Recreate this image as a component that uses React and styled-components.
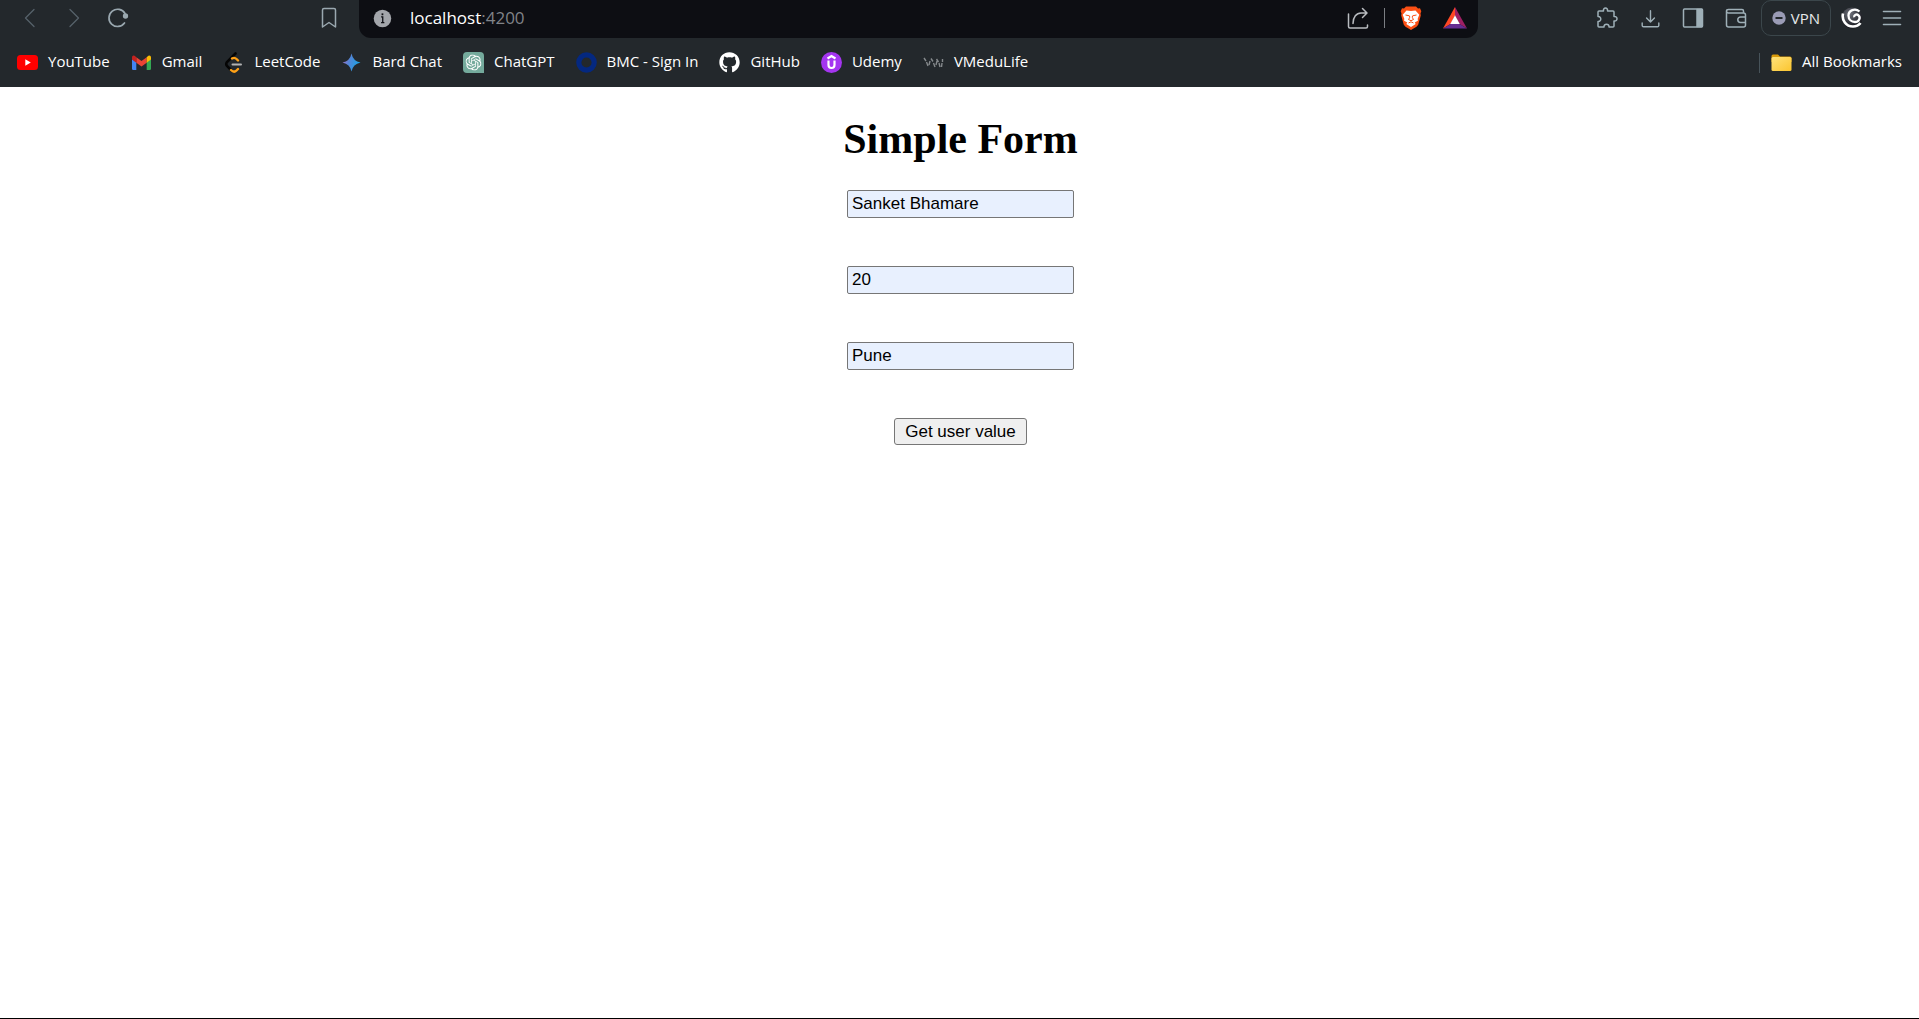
import React, { useState } from "react";
import styled, { createGlobalStyle } from "styled-components";
import { FaGithub } from "react-icons/fa";
import { SiOpenai } from "react-icons/si";

const GlobalStyle = createGlobalStyle`
  *, *::before, *::after { box-sizing: border-box; }
  html, body { margin: 0; }
  body { background: #ffffff; }
`;

const uiFont = `"Open Sans", "Noto Sans", sans-serif`;

const Window = styled.div`
  display: flex;
  flex-direction: column;
  min-height: 100vh;
  border-bottom: 1px solid #000000;
`;

const Chrome = styled.header`
  background: #23282c;
  color: #ffffff;
  font-family: ${uiFont};
`;

const Toolbar = styled.div`
  display: grid;
  grid-template-columns: 359px minmax(0, 1119px) 1fr;
  height: 38px;
`;

const NavGroup = styled.div`
  display: flex;
  align-items: center;
  gap: 20px;
  padding: 0 18px 2px;
  color: #9aa8b0;
`;

const Spacer = styled.span`
  flex: 1;
`;

const IconButton = styled.button`
  display: flex;
  align-items: center;
  justify-content: center;
  flex: none;
  width: 24px;
  height: 36px;
  padding: 0;
  border: 0;
  background: none;
  color: inherit;
  &:disabled { color: #56616a; }
`;

const AddressBar = styled.div`
  display: flex;
  align-items: center;
  gap: 16px;
  padding: 0 11px 2px;
  border-radius: 0 0 12px 12px;
  background: #0d0e13;
  color: #b9bcc0;
`;

const Address = styled.a`
  flex: 1;
  color: #ffffff;
  font-size: 17px;
  line-height: 24px;
  text-decoration: none;
`;

const Port = styled.span`
  color: #808388;
`;

const Divider = styled.span`
  width: 1px;
  height: 20px;
  background: ${(p) => p.$color};
`;

const Shields = styled.div`
  display: flex;
  align-items: center;
  gap: 20px;
`;

const Share = styled.div`
  display: flex;
  align-items: center;
  gap: 14px;
`;

const ToolGroup = styled.div`
  display: flex;
  justify-content: flex-end;
  align-items: center;
  gap: 13px;
  padding: 0 15px 2px 0;
  color: #9fb0b8;
`;

const Tools = styled.div`
  display: flex;
  align-items: center;
  gap: 19px;
`;

const VpnGroup = styled.div`
  display: flex;
  align-items: center;
  gap: 9px;
  padding-right: 3px;
`;

const VpnButton = styled.button`
  display: flex;
  align-items: center;
  justify-content: center;
  gap: 5px;
  width: 70px;
  height: 36px;
  padding: 0;
  border: 1px solid #3b464b;
  border-radius: 10px;
  background: none;
  color: #e6e9ea;
  font-family: ${uiFont};
  font-size: 15px;
`;

const Bookmarks = styled.nav`
  display: flex;
  align-items: center;
  gap: 21px;
  height: 49px;
  padding: 0 17px;
`;

const Bookmark = styled.a`
  display: flex;
  align-items: center;
  gap: 10px;
  color: #ffffff;
  text-decoration: none;
  white-space: nowrap;
`;

const BookmarkLabel = styled.span`
  padding-bottom: 3px;
  font-size: 15px;
  line-height: 20px;
`;

const Folder = styled.div`
  display: flex;
  align-items: center;
  gap: 11px;
  margin-left: auto;
`;

const Page = styled.main`
  flex: 1;
`;

const Form = styled.form`
  display: flex;
  flex-direction: column;
  align-items: center;
  gap: 48px;
  padding: 28px 0 0 2px;
`;

const Heading = styled.h1`
  margin: 0 0 -21px;
  font-family: "Liberation Serif", serif;
  font-size: 42px;
  line-height: 48px;
  font-weight: 700;
  color: #000000;
`;

const Field = styled.input`
  width: 227px;
  height: 28px;
  padding: 0 4px;
  border: 1px solid #767676;
  border-radius: 2px;
  background: #e8f0fe;
  color: #000000;
  font-family: "Liberation Sans", sans-serif;
  font-size: 17px;
`;

const Submit = styled.button`
  width: 133px;
  height: 27px;
  padding: 0;
  border: 1px solid #767676;
  border-radius: 3px;
  background: #efefef;
  color: #000000;
  font-family: "Liberation Sans", sans-serif;
  font-size: 17px;
`;

function Line({ size = 24, width = 2, children }) {
  return (
    <svg width={size} height={size} viewBox="0 0 24 24" fill="none" stroke="currentColor" strokeWidth={width} strokeLinecap="round" strokeLinejoin="round" aria-hidden="true">
      {children}
    </svg>
  );
}

const BackIcon = () => <Line width={1.3}><path d="M16 3.500L7.500 12l8.500 8.500" /></Line>;
const ForwardIcon = () => <Line width={1.3}><path d="M8 3.500l8.500 8.500L8 20.500" /></Line>;
const ReloadIcon = () => (
  <Line width={1.7}>
    <path d="M18.500 17A8.600 8.600 0 1 1 19 7.500" />
    <circle cx="19.500" cy="10" r="1.800" fill="currentColor" />
  </Line>
);
const SaveIcon = () => <Line width={1.5}><path d="M5.500 4q0-1.500 1.500-1.500h10q1.500 0 1.500 1.500v17l-6.500-4.500L5.500 21z" /></Line>;

const InfoIcon = () => (
  <svg width="21" height="21" viewBox="0 0 18 18" aria-hidden="true">
    <circle cx="9" cy="9" r="7.500" fill="#a3a6ab" />
    <path d="M7.800 7.600h1.400v4.800M7.800 12.600h2.800" stroke="#0d0e13" strokeWidth="1.100" fill="none" />
    <rect x="8.200" y="4.600" width="1.500" height="1.600" fill="#0d0e13" />
  </svg>
);

const ShareIcon = () => (
  <Line width={1.5}>
    <path d="M2.500 8v12.500q0 1.500 1.500 1.500h16q1.500 0 1.500-1.500V19M7 17.500C7 11 10.500 7 15 7h5.500M16.500 2.500L21 7l-4.500 4.500" />
  </Line>
);

const BraveIcon = () => (
  <svg width="22" height="24" viewBox="0 0 22 24" aria-hidden="true">
    <path d="M6 .5h10l2 2 2-.2 1.300 3-.8 2.200.3 2-2.600 9.200-1.700 2.100L11 24l-5.500-3.200-1.700-2.100L1.200 9.500l.3-2L.7 5.300l1.300-3 2 .2z" fill="#fb4f14" />
    <path d="M6.500 4.500l4.500.6 4.500-.6 3.800 4.200-1.600 4 .2 2-3.200 1.800 1 1.500-4.700 3-4.700-3 1-1.500-3.200-1.800.2-2-1.600-4z" fill="#fff" />
    <path d="M5.500 9l4 .8M16.500 9l-4 .8M9.600 10v1.700L8.500 13.500l2.500 1.200 2.500-1.200-1.100-1.800V10M8.500 17l2.500-1.200 2.500 1.200" fill="none" stroke="#fb4f14" strokeWidth="1" />
  </svg>
);

const BatIcon = () => (
  <svg width="24" height="22" viewBox="0 0 24 22" aria-hidden="true">
    <path d="M12 0L0 21.500 7.500 17 12 8.500z" fill="#ff4724" />
    <path d="M12 0l12 21.500-7.500-4.500L12 8.500z" fill="#9e1f63" />
    <path d="M0 21.500h24L16.500 17h-9z" fill="#662d91" />
    <path d="M12 8.300L7.200 17h9.600z" fill="#fff" />
  </svg>
);

const PuzzleIcon = () => (
  <Line width={1.5}>
    <path d="M4 5h4.500C7.800 1 13.200 1 12.500 5H18q1 0 1 1v4.500c4-.7 4 5.200 0 4.500V20q0 1-1 1h-4c.4-3.800-5.400-3.800-5 0H4q-1 0-1-1v-4.500c3.700.4 3.700-5.400 0-5V6q0-1 1-1z" />
  </Line>
);
const DownloadIcon = () => (
  <Line size={21} width={1.6}>
    <path d="M12 3v13M7.500 11.500L12 16l4.500-4.500M2.500 17v3q0 1.500 1.500 1.500h16q1.500 0 1.500-1.500v-3" />
  </Line>
);
const PanelIcon = () => (
  <Line width={1.5}>
    <rect x="2.500" y="3" width="19" height="18" rx="1" />
    <path d="M16 3.500h5v17h-5z" fill="currentColor" />
  </Line>
);
const WalletIcon = () => (
  <Line width={1.5}>
    <path d="M19.500 7V5Q19.500 3.500 18 3.500H4.500Q2.500 3.500 2.500 5v14q0 2 2 2h15q2 0 2-2V9q0-2-2-2h-15q-2 0-2-2M21.500 11h-5a2.700 2.700 0 0 0 0 5.400h5" />
  </Line>
);
const VpnIcon = () => (
  <svg width="14" height="14" viewBox="0 0 14 14" aria-hidden="true">
    <circle cx="7" cy="7" r="6.700" fill="#9a9bb5" />
    <rect x="3.500" y="6" width="7" height="2" fill="#23282c" />
  </svg>
);
const SwirlIcon = () => (
  <svg width="22" height="22" viewBox="0 0 22 22" aria-hidden="true">
    <defs>
      <radialGradient id="orb" cx="0.4" cy="0.3" r="0.8">
        <stop offset="0" stopColor="#70737c" />
        <stop offset="0.6" stopColor="#2c2e35" />
        <stop offset="1" stopColor="#0c0d10" />
      </radialGradient>
    </defs>
    <circle cx="11" cy="11" r="10.500" fill="url(#orb)" />
    <path d="M18.500 4.500C14 .5 7.500 3.500 7.500 8.500c0 4 3 6.500 6.500 6.500 4 0 6-4.500 3.500-6.700-2-1.700-4.700-.3-4.300 2" fill="none" stroke="#fff" strokeWidth="2.300" />
    <path d="M2 6.500C.5 13 5 19.500 12 19.500c3.500 0 6-1.500 7.500-3.500" fill="none" stroke="#fff" strokeWidth="2.600" />
  </svg>
);
const MenuIcon = () => <Line width={1.6}><path d="M3.500 5.500h17M3.500 12h17M3.500 18.500h17" /></Line>;

const Logo = ({ children }) => (
  <svg width="21" height="21" viewBox="0 0 21 21" fill="none" aria-hidden="true">{children}</svg>
);

const YouTubeLogo = () => (
  <Logo>
    <rect x="0" y="3" width="21" height="15" rx="3.500" fill="#ff0000" />
    <path d="M8.300 7.300v6.400l5.500-3.200z" fill="#fff" />
  </Logo>
);
const GmailLogo = () => (
  <Logo>
    <path d="M1 7l4.300 3.200V18H2.300Q1 18 1 16.700z" fill="#4285f4" />
    <path d="M20 7l-4.300 3.200V18h3q1.300 0 1.300-1.300z" fill="#34a853" />
    <path d="M5.300 5.200v5.500l5.200 3.900 5.200-3.900V5.200l-5.200 3.900z" fill="#ea4335" />
    <path d="M1 5.500C1 3 3.300 2.800 4.500 4.500l.8.700v5.500L1 7.500z" fill="#c5221f" />
    <path d="M20 5.500c0-2.500-2.300-2.700-3.500-1l-.8.700v5.500L20 7.500z" fill="#fbbc04" />
  </Logo>
);
const LeetCodeLogo = () => (
  <Logo>
    <path d="M12.500 1.500L4 10q-1.500 2 0 4l4 4" stroke="#050505" strokeWidth="2.600" strokeLinecap="round" />
    <path d="M9 6.500q2.500-1.500 4.500.5l1.500 1.500M8 18q3 3 5.500.5l1.500-1.500" stroke="#ffa116" strokeWidth="2.400" strokeLinecap="round" />
    <path d="M9.500 12.500H18" stroke="#b3b3b3" strokeWidth="2" strokeLinecap="round" />
  </Logo>
);
const BardLogo = () => (
  <Logo>
    <defs>
      <linearGradient id="bard" x1="0" y1="0" x2="1" y2="0.3">
        <stop offset="0" stopColor="#b56fc4" />
        <stop offset="0.45" stopColor="#5484d6" />
        <stop offset="1" stopColor="#1ba1e3" />
      </linearGradient>
    </defs>
    <path d="M10.500 1.500q1.500 7.500 9 9-7.500 1.500-9 9-1.500-7.500-9-9 7.500-1.500 9-9z" fill="url(#bard)" />
  </Logo>
);
const ChatGptLogo = () => (
  <Logo>
    <path d="M4 0h13q4 0 4 4v17H4q-4 0-4-4V4q0-4 4-4z" fill="#74aa9c" />
    <SiOpenai x="2.500" y="2.500" width="16" height="16" color="#fff" />
  </Logo>
);
const BmcLogo = () => <Logo><circle cx="10.500" cy="10.500" r="7.700" stroke="#042880" strokeWidth="5.200" /></Logo>;
const UdemyLogo = () => (
  <Logo>
    <circle cx="10.500" cy="10.500" r="10.500" fill="#a435f0" />
    <path d="M6.500 6.500l4-2.500 4 2.500M7.500 8.500V13a3 3 0 0 0 6 0V8.500" stroke="#fff" strokeWidth="2.200" />
  </Logo>
);
const VmLogo = () => (
  <Logo>
    <path d="M1 6l2 3M3.500 10l1.500 4M7 9l-1 4M8 6.500l2 3M10.500 11l1.500 4M14 9l-1 4M13.500 7l2 3M16 11l1 4M19.500 7v3M19 11l-.5 4" stroke="#85898c" strokeWidth="1.400" />
  </Logo>
);
const FolderIcon = () => (
  <svg width="21" height="21" viewBox="0 0 21 21" aria-hidden="true">
    <defs>
      <linearGradient id="folder" x1="0" y1="0" x2="1" y2="1">
        <stop offset="0" stopColor="#ffe27a" />
        <stop offset="1" stopColor="#fbc52f" />
      </linearGradient>
    </defs>
    <path d="M.5 4q0-1.500 1.500-1.500h5L9 4.500h10q1.500 0 1.500 1.500v4H.5z" fill="#d99a0b" />
    <rect x=".5" y="5" width="20" height="14" rx="1.500" fill="url(#folder)" />
  </svg>
);

const bookmarks = [
  { name: "YouTube", href: "#youtube", Icon: YouTubeLogo },
  { name: "Gmail", href: "#gmail", Icon: GmailLogo },
  { name: "LeetCode", href: "#leetcode", Icon: LeetCodeLogo },
  { name: "Bard Chat", href: "#bard", Icon: BardLogo },
  { name: "ChatGPT", href: "#chatgpt", Icon: ChatGptLogo },
  { name: "BMC - Sign In", href: "#bmc", Icon: BmcLogo },
  { name: "GitHub", href: "#github", Icon: () => <FaGithub size={21} /> },
  { name: "Udemy", href: "#udemy", Icon: UdemyLogo },
  { name: "VMeduLife", href: "#vmedulife", Icon: VmLogo },
];

const initialUser = { name: "Sanket Bhamare", age: "20", city: "Pune" };

export default function App() {
  const [user, setUser] = useState(initialUser);
  const update = (e) => setUser({ ...user, [e.target.name]: e.target.value });

  return (
    <Window>
      <GlobalStyle />
      <Chrome>
        <Toolbar>
          <NavGroup>
            <IconButton aria-label="Back" disabled><BackIcon /></IconButton>
            <IconButton aria-label="Forward" disabled><ForwardIcon /></IconButton>
            <IconButton aria-label="Reload"><ReloadIcon /></IconButton>
            <Spacer />
            <IconButton aria-label="Bookmark this tab"><SaveIcon /></IconButton>
          </NavGroup>
          <AddressBar>
            <IconButton aria-label="Site information"><InfoIcon /></IconButton>
            <Address href="#home">localhost<Port>:4200</Port></Address>
            <Shields>
              <Share>
                <IconButton aria-label="Share"><ShareIcon /></IconButton>
                <Divider $color="#7b7e83" />
                <IconButton aria-label="Shields"><BraveIcon /></IconButton>
              </Share>
              <IconButton aria-label="Rewards"><BatIcon /></IconButton>
            </Shields>
          </AddressBar>
          <ToolGroup>
            <Tools>
              <IconButton aria-label="Extensions"><PuzzleIcon /></IconButton>
              <IconButton aria-label="Downloads"><DownloadIcon /></IconButton>
              <IconButton aria-label="Side panel"><PanelIcon /></IconButton>
              <IconButton aria-label="Wallet"><WalletIcon /></IconButton>
            </Tools>
            <VpnGroup>
              <VpnButton><VpnIcon />VPN</VpnButton>
              <IconButton aria-label="Profile"><SwirlIcon /></IconButton>
            </VpnGroup>
            <IconButton aria-label="Menu"><MenuIcon /></IconButton>
          </ToolGroup>
        </Toolbar>
        <Bookmarks aria-label="Bookmarks">
          {bookmarks.map(({ name, href, Icon }) => (
            <Bookmark key={name} href={href}>
              <Icon />
              <BookmarkLabel>{name}</BookmarkLabel>
            </Bookmark>
          ))}
          <Folder>
            <Divider $color="#47535a" />
            <Bookmark href="#all">
              <FolderIcon />
              <BookmarkLabel>All Bookmarks</BookmarkLabel>
            </Bookmark>
          </Folder>
        </Bookmarks>
      </Chrome>
      <Page>
        <Form onSubmit={(e) => e.preventDefault()}>
          <Heading>Simple Form</Heading>
          <Field name="name" aria-label="Name" value={user.name} onChange={update} />
          <Field name="age" aria-label="Age" value={user.age} onChange={update} />
          <Field name="city" aria-label="City" value={user.city} onChange={update} />
          <Submit type="submit">Get user value</Submit>
        </Form>
      </Page>
    </Window>
  );
}
